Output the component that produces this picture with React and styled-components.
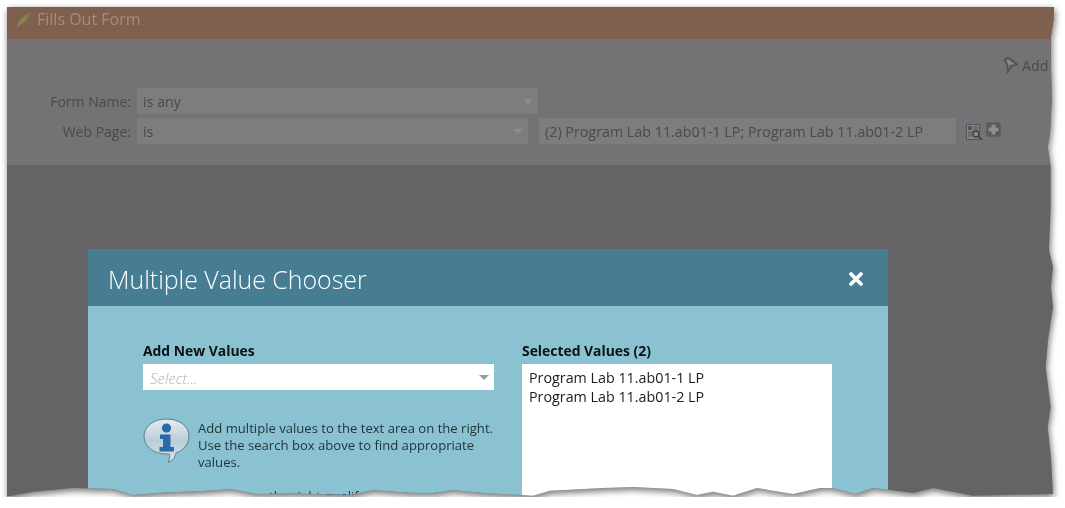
import React from "react";
import styled, { createGlobalStyle } from "styled-components";

const Global = createGlobalStyle`
  html, body { margin: 0; padding: 0; background: #fff; }
  body { font-family: "Open Sans", "Liberation Sans", sans-serif; }
`;

const tornEdge = [
  [0, 0], [1047, 0], [1046.5, 13], [1043.7, 31], [1044, 60], [1044.7, 93], [1043, 126], [1040.7, 140],
  [1043.7, 160], [1043.7, 200], [1042, 243], [1046, 260], [1044, 280], [1046, 300], [1041, 333], [1038.7, 360],
  [1043.7, 400], [1040.7, 420], [1044, 450], [1046, 487],
  [966, 488.7], [926, 481], [906, 486], [883, 483], [866, 481], [848, 487], [826, 481], [813, 481], [786, 487],
  [750, 481], [726, 488.7], [706, 484.7], [690, 488], [666, 482], [626, 480], [596, 481], [543, 483.7], [526, 488.7],
  [476, 486], [446, 483], [426, 486], [403, 485.7], [366, 483], [343, 488], [286, 486.3], [250, 487], [223, 482],
  [200, 483.7], [153, 485.7], [126, 488], [106, 482], [66, 481], [26, 484.7], [0, 489.7],
].map(([x, y]) => `${x}px ${y}px`).join(", ");

const Shadow = styled.div`
  width: 1047px;
  height: 490px;
  margin: 7px 0 0 7px;
  filter: drop-shadow(1px 3px 3px rgba(0, 0, 0, 0.42)) drop-shadow(1px 1px 3px rgba(0, 0, 0, 0.18));
`;

const Sheet = styled.div`
  display: flex;
  flex-direction: column;
  width: 1047px;
  height: 490px;
  overflow: hidden;
  clip-path: polygon(${tornEdge});
  background: #656365;
`;

const TitleBar = styled.div`
  display: flex;
  align-items: center;
  gap: 4px;
  box-sizing: border-box;
  height: 32px;
  flex: none;
  padding: 0 0 8px 9px;
  background: #7f5f4e;
  color: #a08e82;
  font-size: 16px;
`;

const FormArea = styled.div`
  display: flex;
  flex-direction: column;
  height: 126px;
  flex: none;
  background: #747274;
  color: #4b494b;
  font-size: 14px;
`;

const AddLink = styled.div`
  display: flex;
  align-items: center;
  gap: 3px;
  height: 18px;
  margin: 17px 0 14px 996px;
  white-space: nowrap;
  font-size: 14.2px;
`;

const Rows = styled.div`
  display: flex;
  flex-direction: column;
  gap: 4px;
`;

const Row = styled.div`
  display: flex;
  align-items: center;
`;

const Label = styled.div`
  width: 124px;
  margin-right: 6px;
  text-align: right;
`;

const Field = styled.div`
  position: relative;
  box-sizing: border-box;
  width: ${(p) => p.$width}px;
  height: 26px;
  margin-right: ${(p) => p.$gap || 0}px;
  padding: 0 6px;
  line-height: 28px;
  background: #7e7c7e;
  font-size: 14.3px;
`;

const Arrow = styled.span`
  position: absolute;
  top: 11px;
  right: 5px;
  border-style: solid;
  border-width: 5px 5.5px 0;
  border-color: ${(p) => p.$color} transparent transparent;
`;

const RowIcons = styled.div`
  display: flex;
  align-items: flex-start;
  gap: 3px;
  height: 18px;
  margin: 0 0 0 10px;
  svg { flex: none; }
`;

const SearchSlot = styled.span`
  display: block;
  height: 17px;
  margin-top: 2px;
`;

const PlusSlot = styled.span`
  display: block;
  height: 15px;
`;

const Backdrop = styled.div`
  flex: 1;
  padding: 84px 0 0 81px;
`;

const Modal = styled.div`
  width: 800px;
  background: #8ac2d2;
`;

const ModalHead = styled.div`
  display: flex;
  align-items: center;
  justify-content: space-between;
  box-sizing: border-box;
  height: 57px;
  padding: 2px 25px 0 20px;
  background: #467d92;
  color: #fff;
  font-size: 24.9px;
  font-weight: 300;
`;

const ModalBody = styled.div`
  display: flex;
  gap: 28px;
  padding: 36px 0 0 55px;
  height: 300px;
`;

const LeftCol = styled.div`
  width: 351px;
`;

const RightCol = styled.div`
  width: 310px;
`;

const ColTitle = styled.div`
  height: 22px;
  line-height: 17px;
  color: #0c1214;
  font-size: 13.9px;
  font-weight: 700;
`;

const SelectBox = styled.div`
  position: relative;
  box-sizing: border-box;
  height: 26px;
  padding: 0 7px;
  line-height: 28px;
  background: #fff;
  color: #b0b0b0;
  font-size: 15px;
  font-style: italic;
  font-weight: 300;
`;

const ValueList = styled.div`
  box-sizing: border-box;
  height: 200px;
  padding: 4px 7px;
  background: #fff;
  color: #1b1b1b;
  font-size: 14.3px;
  line-height: 19px;
`;

const Note = styled.div`
  display: flex;
  gap: 8px;
  margin-top: 28px;
  color: #1f3238;
  font-size: 13.1px;
  line-height: 17px;
`;

const NoteText = styled.div`
  padding-top: 2px;
  p { margin: 0 0 17px; }
`;

const Feather = () => (
  <svg width="17" height="17" viewBox="0 0 17 17" style={{ flex: "none" }}>
    <path d="M1 15 C2 9 6 5 15 1 C14 8 9 13 3 13 Z" fill="#7f7c4a" />
    <path d="M1 16 L9 7" stroke="#a69a6a" strokeWidth="1" />
  </svg>
);

const Funnel = () => (
  <svg width="16" height="17" viewBox="0 0 16 17" style={{ flex: "none" }}>
    <path d="M1 3 C2.5 0 6 0.5 8 2 L15 7.5 L9.5 9 C7.5 11 6.5 14 4 16.5 C5 12 4.5 7.5 1 3 Z" fill="#5c5a5c" stroke="#4b494b" strokeWidth="0.8" />
    <path d="M3 3 C4.5 2 6 2.5 7.5 4 L12 7.3 L8 7.5 C6.5 8.5 6 10 5.5 11.5 C5.8 8.5 5 5.5 3 3 Z" fill="#8a888a" />
  </svg>
);

const ReportSearch = () => (
  <svg width="17" height="17" viewBox="0 0 17 17">
    <rect x="0.5" y="0.5" width="13" height="15" fill="#868486" stroke="#565456" />
    <rect x="2" y="2" width="4" height="4" fill="#46586c" />
    <path d="M7 3h5M7 5h5M2 8h5M2 10h4M2 12h4" stroke="#4f5f4f" strokeWidth="1" />
    <circle cx="10" cy="10" r="3" fill="#8a8a8c" stroke="#3f3d3f" strokeWidth="1.3" />
    <path d="M12 12l4 4" stroke="#3f3d3f" strokeWidth="1.6" />
  </svg>
);

const PlusBox = () => (
  <svg width="15" height="15" viewBox="0 0 15 15">
    <rect x="0.5" y="0.5" width="14" height="14" rx="2" fill="#5a585a" stroke="#636163" />
    <path d="M7.5 2.5v10M2.5 7.5h10" stroke="#8f8d8f" strokeWidth="4" />
  </svg>
);

const CloseIcon = () => (
  <svg width="14" height="14" viewBox="0 0 14 14">
    <path d="M2 2 L12 12 M12 2 L2 12" stroke="#fff" strokeWidth="3.6" strokeLinecap="round" />
  </svg>
);

const InfoIcon = () => (
  <svg width="47" height="45" viewBox="0 0 47 45" style={{ flex: "none" }}>
    <defs>
      <linearGradient id="bubble" x1="0" y1="0" x2="0" y2="1">
        <stop offset="0" stopColor="#e6edf1" />
        <stop offset="0.5" stopColor="#b9cdd8" />
        <stop offset="1" stopColor="#dbe5ea" />
      </linearGradient>
    </defs>
    <path
      d="M23.5 1 C36 1 46 8 46 18.5 C46 27 39 33 33 35 C32 39 31 42 25 44.5 C27 41 27 38 26.5 36 L23 36 C11 36 1 28.5 1 18.5 C1 8 11 1 23.5 1 Z"
      fill="url(#bubble)"
      stroke="#5f7d8f"
      strokeWidth="1"
    />
    <circle cx="23.5" cy="10" r="4.6" fill="#2a6aa6" />
    <path d="M17 16.5 H27.5 V29 H31 V33.5 H16.5 V29 H20 V21 H17 Z" fill="#2a6aa6" />
  </svg>
);

export default function App() {
  return (
    <>
      <Global />
      <Shadow>
        <Sheet>
          <TitleBar>
            <Feather />
            Fills Out Form
          </TitleBar>
          <FormArea>
            <AddLink>
              <Funnel />
              Add Constraint
            </AddLink>
            <Rows>
              <Row>
                <Label>Form Name:</Label>
                <Field $width={401}>
                  is any
                  <Arrow $color="#8f8d8f" />
                </Field>
              </Row>
              <Row>
                <Label>Web Page:</Label>
                <Field $width={391} $gap={11}>
                  is
                  <Arrow $color="#8f8d8f" />
                </Field>
                <Field $width={417}>(2) Program Lab 11.ab01-1 LP; Program Lab 11.ab01-2 LP</Field>
                <RowIcons>
                  <SearchSlot>
                    <ReportSearch />
                  </SearchSlot>
                  <PlusSlot>
                    <PlusBox />
                  </PlusSlot>
                </RowIcons>
              </Row>
            </Rows>
          </FormArea>
          <Backdrop>
            <Modal>
              <ModalHead>
                Multiple Value Chooser
                <CloseIcon />
              </ModalHead>
              <ModalBody>
                <LeftCol>
                  <ColTitle>Add New Values</ColTitle>
                  <SelectBox>
                    Select...
                    <Arrow $color="#9a9a9a" />
                  </SelectBox>
                  <Note>
                    <InfoIcon />
                    <NoteText>
                      <p>
                        Add multiple values to the text area on the right.
                        <br />
                        Use the search box above to find appropriate
                        <br />
                        values.
                      </p>
                      <p>Options on the right qualify this</p>
                    </NoteText>
                  </Note>
                </LeftCol>
                <RightCol>
                  <ColTitle>Selected Values (2)</ColTitle>
                  <ValueList>
                    Program Lab 11.ab01-1 LP
                    <br />
                    Program Lab 11.ab01-2 LP
                  </ValueList>
                </RightCol>
              </ModalBody>
            </Modal>
          </Backdrop>
        </Sheet>
      </Shadow>
    </>
  );
}
